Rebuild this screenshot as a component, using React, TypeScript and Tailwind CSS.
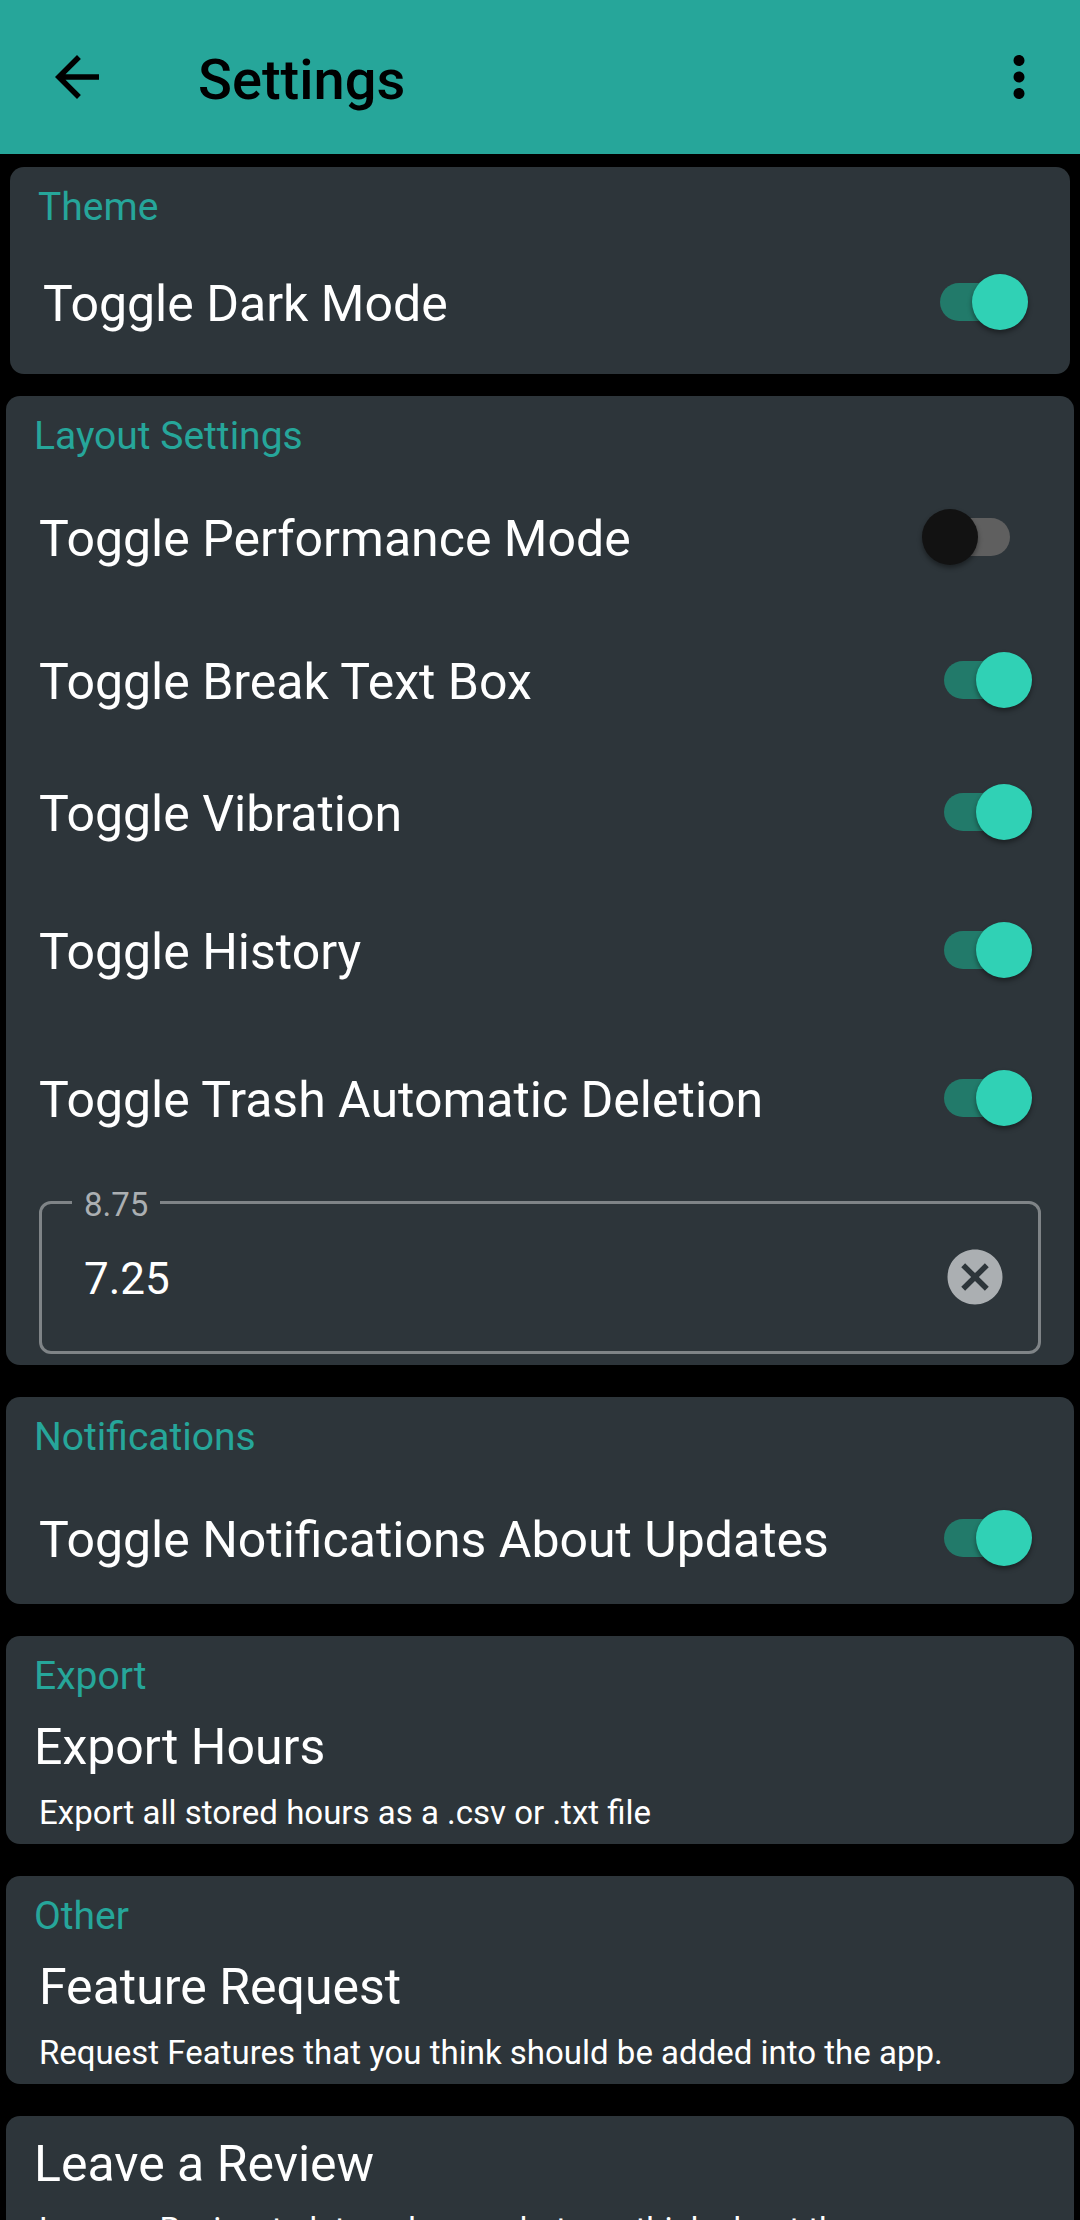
import { useId, useState, type ReactNode } from "react";

function Switch({ id, initial }: { id: string; initial: boolean }) {
  const [on, setOn] = useState(initial);
  return (
    <span className="relative flex h-[56px] w-[110px] shrink-0 items-center">
      <input
        id={id}
        type="checkbox"
        role="switch"
        checked={on}
        onChange={(e) => setOn(e.target.checked)}
        className="peer absolute inset-0 z-10 cursor-pointer appearance-none"
      />
      <span className="mx-auto h-[38px] w-[66px] rounded-full bg-[#5f5f5f] peer-checked:bg-[#227a6a]" />
      <span className="absolute left-0 size-[56px] rounded-full bg-[#121212] shadow-[0_3px_5px_rgba(0,0,0,0.4)] peer-checked:right-0 peer-checked:left-auto peer-checked:bg-[#30d1b5]" />
    </span>
  );
}

function ToggleRow({ label, on = true, height = "h-[144px]" }: { label: string; on?: boolean; height?: string }) {
  const id = useId();
  return (
    <div className={`flex items-center justify-between pr-[42px] pl-[33px] ${height}`}>
      <label htmlFor={id} className="pt-[4px] text-[50px] leading-[58px]">
        {label}
      </label>
      <Switch id={id} initial={on} />
    </div>
  );
}

function Card({ heading, children, className = "mx-[6px]" }: { heading?: string; children: ReactNode; className?: string }) {
  return (
    <section className={`rounded-[14px] bg-[#2d353a] ${className}`}>
      {heading && (
        <h2 className="px-[28px] pt-[18px] text-[39px] leading-[45px] text-[#26a69a]">{heading}</h2>
      )}
      {children}
    </section>
  );
}

function LinkItem({ title, text, indent = "pl-[28px]" }: { title: string; text: string; indent?: string }) {
  return (
    <a href="#" className="block pt-[19px] pb-[12px]">
      <span className={`block text-[50px] leading-[58px] ${indent}`}>{title}</span>
      <span className="mt-[17px] block pl-[33px] text-[33px] leading-[39px]">{text}</span>
    </a>
  );
}

function HoursField() {
  const id = useId();
  const [value, setValue] = useState("7.25");
  return (
    <div className="px-[33px] pt-[10px] pb-[11px]">
      <fieldset className="rounded-[12px] border-3 border-[#7f8487] pr-[30px] pl-[30px]">
        <legend className="h-[34px] px-[12px] text-[33px] leading-[39px] text-[#abafb2]">
          <label htmlFor={id}>8.75</label>
        </legend>
        <div className="flex h-[132px] items-start justify-between pl-[12px]">
          <input
            id={id}
            type="text"
            inputMode="decimal"
            value={value}
            onChange={(e) => setValue(e.target.value)}
            className="mt-[34px] h-[52px] min-w-0 flex-1 bg-transparent text-[44px] leading-[52px] outline-none"
          />
          <button type="button" aria-label="Clear" onClick={() => setValue("")} className="mt-[25px]">
            <svg viewBox="0 0 24 24" className="size-[66px]" fill="#abafb2" aria-hidden="true">
              <path d="M12 2C6.47 2 2 6.47 2 12s4.47 10 10 10 10-4.47 10-10S17.53 2 12 2zm5 13.59L15.59 17 12 13.41 8.41 17 7 15.59 10.59 12 7 8.41 8.41 7 12 10.59 15.59 7 17 8.41 13.41 12 17 15.59z" />
            </svg>
          </button>
        </div>
      </fieldset>
    </div>
  );
}

export default function App() {
  return (
    <div className="flex h-screen flex-col bg-black font-['Roboto',sans-serif] text-white">
      <header className="flex h-[154px] shrink-0 items-center bg-[#26a69a] pr-[28px] pl-[44px] text-black">
        <button type="button" aria-label="Back">
          <svg viewBox="0 0 24 24" className="size-[66px]" aria-hidden="true">
            <path d="M20 11H7.83l5.59-5.59L12 4l-8 8 8 8 1.41-1.41L7.83 13H20v-2z" />
          </svg>
        </button>
        <h1 className="flex-1 pt-[6px] pl-[88px] text-[56px] leading-[64px] font-medium">Settings</h1>
        <button type="button" aria-label="More options">
          <svg viewBox="0 0 24 24" className="size-[66px]" aria-hidden="true">
            <path d="M12 8c1.1 0 2-.9 2-2s-.9-2-2-2-2 .9-2 2 .9 2 2 2zm0 2c-1.1 0-2 .9-2 2s.9 2 2 2 2-.9 2-2-.9-2-2-2zm0 6c-1.1 0-2 .9-2 2s.9 2 2 2 2-.9 2-2-.9-2-2-2z" />
          </svg>
        </button>
      </header>

      <main className="flex flex-1 flex-col gap-[32px] overflow-y-auto pt-[13px] [scrollbar-width:none]">
        <Card heading="Theme" className="mx-[10px] -mb-[10px]">
          <ToggleRow label="Toggle Dark Mode" />
        </Card>

        <Card heading="Layout Settings">
          <ToggleRow label="Toggle Performance Mode" on={false} height="h-[156px]" />
          <ToggleRow label="Toggle Break Text Box" height="h-[130px]" />
          <ToggleRow label="Toggle Vibration" height="h-[134px]" />
          <ToggleRow label="Toggle History" height="h-[142px]" />
          <ToggleRow label="Toggle Trash Automatic Deletion" height="h-[154px]" />
          <HoursField />
        </Card>

        <Card heading="Notifications">
          <ToggleRow label="Toggle Notifications About Updates" height="h-[144px] pt-[12px]" />
        </Card>

        <Card heading="Export">
          <LinkItem title="Export Hours" text="Export all stored hours as a .csv or .txt file" />
        </Card>

        <Card heading="Other">
          <LinkItem
            title="Feature Request"
            text="Request Features that you think should be added into the app."
            indent="pl-[33px]"
          />
        </Card>

        <Card>
          <LinkItem title="Leave a Review" text="Leave a Review to let me know what you think about the app" />
        </Card>
      </main>
    </div>
  );
}
